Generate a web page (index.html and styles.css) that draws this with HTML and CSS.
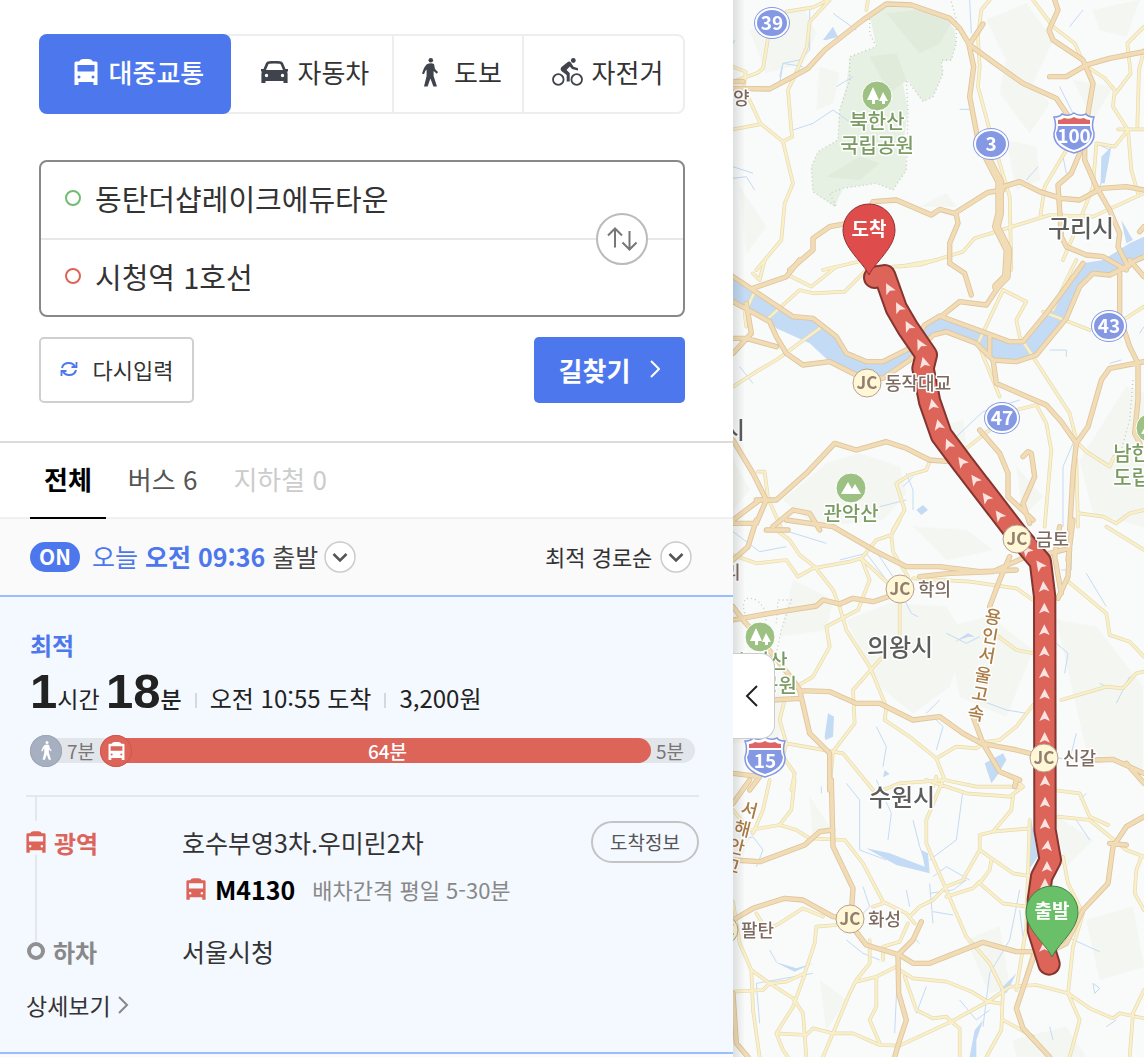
FILE: index.html
```html
<!DOCTYPE html>
<html lang="ko">
<head>
<meta charset="utf-8">
<meta name="viewport" content="width=device-width, initial-scale=1">
<title>길찾기</title>
<link rel="stylesheet" href="styles.css">
</head>
<body>
<svg class="sprite" aria-hidden="true">
  <symbol id="i-bus" viewBox="0 0 24 26"><path fill-rule="evenodd" d="M2 2.500H5Q6 0 9 0h6q3 0 4 2.500h3q1.500 0 1.500 1.500V26h-4v-3H4.500v3h-4V4q0-1.500 1.500-1.500zM3.500 6v6.500h17V6zM5 16.500a1.500 1.500 0 1 0 0 3 1.500 1.500 0 0 0 0-3zM19 16.500a1.500 1.500 0 1 0 0 3 1.500 1.500 0 0 0 0-3z"/></symbol>
  <symbol id="i-car" viewBox="0 0 27 22"><path fill-rule="evenodd" d="M0 8h2.500L5 2Q5.800.400 8 .200q5.500-.600 11 0 2.200.200 3 1.800l2.500 6H27v2.500h-1q.600 1 .600 2.500v9H22.500v-2h-18v2H.400v-9q0-1.500.600-2.500H0zM5 9h17l-2.300-5.400Q19.400 3 18.500 2.800q-5-.500-10 0-.900.200-1.200.800zM5.500 12.800a1.700 1.700 0 1 0 0 3.400 1.700 1.700 0 0 0 0-3.400zM21.500 12.800a1.700 1.700 0 1 0 0 3.400 1.700 1.700 0 0 0 0-3.400z"/></symbol>
  <symbol id="i-walk" viewBox="0 0 16 29"><circle cx="8.800" cy="2.300" r="2.300"/><path d="M4.500 6.500Q8.500 4.500 12 6l1 5 3 3-1.200 1.800L11.600 13v5L15 28.600h-3.600L8.400 20.500 5.600 28.600H2L4.600 18v-6.500L3.300 13 2 16.200 0 15.400 2 10z"/></symbol>
  <symbol id="i-bike" viewBox="0 0 31 28"><circle cx="6.300" cy="21.500" r="5.300" fill="none" stroke="currentColor" stroke-width="1.800"/><circle cx="24.700" cy="21.500" r="5.300" fill="none" stroke="currentColor" stroke-width="1.800"/><circle cx="21.300" cy="2.500" r="2.400"/><path d="M9.500 9l6-4.800q2-1.500 3.500.500l2.500 4 4.500 1.500V12.400L20 11 17.800 8.500 14.500 12l3.200 3V23.600h-3V17L10 13.500Q7.500 11.500 9.500 9z"/></symbol>
  <symbol id="i-down" viewBox="0 0 32 32"><circle cx="16" cy="16" r="15" fill="#fff" stroke="#ccc" stroke-width="1.500"/><path d="M9.500 13l6.500 6.500 6.500-6.500" fill="none" stroke="#555" stroke-width="2.500"/></symbol>
</svg>

<main class="app">
<div class="panel">
  <form class="search">
    <nav class="modes" aria-label="이동 수단">
      <button type="button" class="mode mode-on"><svg width="24" height="26"><use href="#i-bus"/></svg>대중교통</button>
      <button type="button" class="mode mode-car"><svg width="27" height="22"><use href="#i-car"/></svg>자동차</button>
      <button type="button" class="mode mode-walk"><svg width="16" height="29"><use href="#i-walk"/></svg>도보</button>
      <button type="button" class="mode mode-bike"><svg width="31" height="28"><use href="#i-bike"/></svg>자전거</button>
    </nav>
    <div class="places">
      <div class="place"><span class="dot dot-start"></span><input type="text" aria-label="출발지" value="동탄더샵레이크에듀타운"></div>
      <div class="place"><span class="dot dot-end"></span><input type="text" aria-label="도착지" value="시청역 1호선"></div>
      <button type="button" class="swap" aria-label="출발지와 도착지 바꾸기"><svg width="30" height="24" viewBox="0 0 30 24" fill="none" stroke="#777" stroke-width="2"><path d="M8 20.500V1.500M1 8.500l7-7 7 7M22.500 4v18.500M15.500 15.500l7 7 7-7"/></svg></button>
    </div>
    <div class="actions">
      <button type="reset" class="reset"><svg width="18" height="16" viewBox="0 0 18 16" fill="none" stroke="#4d77ec" stroke-width="2"><path d="M2 7Q3 2 9 2q4 0 6 3.500M16 9q-1 5-7 5-4 0-6-3.500"/><path d="M16.500 1v5h-5M1.500 15v-5h5" stroke-width="1.800"/></svg>다시입력</button>
      <button type="submit" class="find">길찾기<svg width="10" height="18" viewBox="0 0 10 18" fill="none" stroke="#fff" stroke-width="2"><path d="M1 1l8 8-8 8"/></svg></button>
    </div>
  </form>

  <nav class="filters" aria-label="경로 종류">
    <button type="button" class="filter filter-on">전체</button>
    <button type="button" class="filter">버스 6</button>
    <button type="button" class="filter" disabled>지하철 0</button>
  </nav>

  <div class="options">
    <button type="button" class="power" aria-pressed="true">ON</button>
    <button type="button" class="depart"><span class="depart-text"><span class="when">오늘 <b>오전 09:36</b></span> 출발</span><svg width="32" height="32"><use href="#i-down"/></svg></button>
    <label class="sort"><select aria-label="정렬"><option>최적 경로순</option></select><svg width="32" height="32"><use href="#i-down"/></svg></label>
  </div>

  <article class="route">
    <div class="badge">최적</div>
    <div class="summary">
      <div class="total"><b>1</b>시간 <b>18</b><strong>분</strong></div>
      <div class="fact">오전 10:55 도착</div>
      <div class="fact">3,200원</div>
    </div>
    <div class="bar">
      <span class="knob knob-walk"><svg width="11" height="19"><use href="#i-walk"/></svg></span>
      <span class="walk">7분</span>
      <span class="knob knob-bus"><svg width="17" height="18"><use href="#i-bus"/></svg></span>
      <span class="ride">64분</span>
      <span class="last">5분</span>
    </div>
    <div class="steps">
      <div class="rail rail-top"></div>
      <div class="stop stop-bus"><svg width="20" height="22"><use href="#i-bus"/></svg>광역</div>
      <div class="name">호수부영3차.우미린2차</div>
      <button type="button" class="arrivals">도착정보</button>
      <div class="rail rail-mid"></div>
      <div class="line"><svg width="20" height="22"><use href="#i-bus"/></svg><b>M4130</b><span>배차간격 평일 5-30분</span></div>
      <div class="stop stop-off"><span class="ring"></span>하차</div>
      <div class="name">서울시청</div>
    </div>
    <a class="more" href="#detail">상세보기<svg width="11" height="18" viewBox="0 0 11 18" fill="none" stroke="#888" stroke-width="2"><path d="M1 1l8 8-8 8"/></svg></a>
  </article>
</div>

<section class="map" aria-label="지도">
<svg class="canvas" viewBox="0 0 411 1057" preserveAspectRatio="xMidYMid slice">
<defs>
  <path id="arrow" d="M0-17L16 15 0 8-16 15z"/>
  <path id="track" d="M425 832L455 827 490 925 525 985 580 1065 570 1105 590 1205 625 1305 690 1392 850 1600 922 1685 935 1790 936 2490 952 2580 926 2630 916 2700 916 2790 948 2892"/>
  <g id="minor">
    <path d="M290 0L230 65 222 140 182 235 165 270 175 390 178 410 150 425 180 550 155 610 145 720 70 810M160 35L240 22 285 0M105 115L90 205 75 218 0 245M0 200l38 15-5 45M45 290L82 370 150 425M0 388l80-15M400 30l5-30M770 0L745 30 735 110 740 200 735 260 770 390 830 590 835 810M900 0L960 80 1025 130 1055 195 1115 235 1145 270 1140 320 1185 390 1195 510 1215 580M1233 80l-50 50 10 90-45 60M1233 150l-15 60-5 170M1155 388H1233M1185 390L1145 440 1090 430 1080 560 1045 650 990 780M1000 450L935 560 922 650M480 800L560 795 690 755 725 715 950 645 1080 650 1233 580M270 810L375 785"/>
    <path transform="translate(0 780)" d="M60 40l20 20 15-60M165 45L235 80 310 20M100 180L200 90 240 100 335 95 400 30M500 20L610 0M810 90L735 250 800 410M810 90L880 125 850 180 860 230 900 290 1010 460 1030 540M65 95L35 160 40 200M0 380L70 335 130 300 260 205M930 155L1070 210M1170 180L1233 140M700 565L770 510M850 450L910 435 940 490 955 570 935 800M1030 545L1060 575 1130 620 1143 590M75 635l20 0 10 80 40 90M590 605L580 630 530 645 490 670 515 750 480 810M1035 800L1030 600M1040 760L1110 770 1150 790 1190 760 1233 750M960 150L1000 60 1030 0"/>
    <path transform="translate(0 1560)" d="M0 105L70 130 160 120 195 170 240 145 350 125 385 115 410 180 375 270 280 320 290 380 240 470 190 500M130 30L170 60 200 105 245 140 300 210 320 260 340 330 410 440 460 560 455 600 530 650 610 715 635 780M385 115L460 185M500 0L475 45 430 60 385 115M475 45L480 95 525 170M500 240V345M445 415L360 510 365 610 300 695 290 800M540 175L710 185 850 205 900 240M790 345L850 390 900 400M1000 180L1120 280 1130 345 1190 365 1233 410M985 540L1120 500 1170 505 1210 460 1233 455M900 555L850 620 800 660 760 665M155 540L140 600 160 670 150 710 185 760 175 810M160 670L330 700 420 810M610 715L670 680 730 685 760 665M450 810L500 790 635 780 730 800 860 800M600 800L610 770M1120 20L1233 90"/>
    <path transform="translate(0 2340)" d="M185 0L175 90 140 135 50 150 0 90M110 0L90 90 60 160M140 135L190 150 230 175 335 180 390 250 450 365 520 400 545 430M630 0L580 120V190L640 330 700 470 770 550 810 630 805 750 760 831M580 0L700 40 830 50 870 20 850 0M840 50L835 90 780 155 740 165V210L840 280 900 290M740 210L700 280 690 300 640 320 600 360 560 380 530 410M780 155L890 145M420 380L450 370M740 305L720 325 640 350M740 310L810 370 880 380M775 240L770 270 740 310M960 30L1040 40 1070 110 1125 135M975 110L1070 120 1180 210 1233 230M990 230L1005 310 1050 400 1020 500 1005 640 1040 720 1010 831M1225 230L1210 270 1205 340 1233 390M0 365L20 490 55 570 60 690 80 831M55 570L110 610 160 605 215 580 245 490 250 440 310 435M0 635L90 630 110 610 180 655 210 700 220 831M215 585L180 680 130 760 150 810 165 831M130 760L220 765 240 745 300 760H360L440 795 500 797 655 725 680 745V831M270 831L350 640 370 600 410 550V480M370 605L430 590 490 560M430 590L430 680 410 720 440 790M500 570L540 595 640 605 715 635 765 665 800 670M515 590L550 690 600 715 640 710 655 725M655 725L700 700 765 665 830 620 910 615 1005 640 1070 685 1140 715 1160 700 1233 715M1233 630L1200 700 1190 831M850 630L880 440 890 120M870 620L900 520M810 720L900 770M70 400L100 450 140 430 210 385 270 410M450 540V500L500 485 525 430"/>
  </g>
  <g id="major">
    <path d="M0 265L110 267 180 230 225 205 275 150 390 60 460 12 535 15 650 55 680 85 710 135 820 215 870 250 970 295 1010 355M0 245H30M750 72L708 135 722 200 710 290 735 420 800 545M965 0L975 30 948 90 960 120 1050 180 1080 250 1055 400 1055 480 1090 560 1130 630 1160 700 1155 740 1185 800M950 230H1000L1060 195 1130 175 1233 155M1040 460L1015 520 975 555 985 710 1000 740 1060 765 1110 770 1180 810M810 560L860 545 920 575 985 595 1040 600 1105 565 1180 560 1233 570M170 810L240 750V715L290 680 400 660 420 605 490 600 595 645 620 628 665 640 765 577 810 570M670 645L675 670 650 730 650 790M1233 770L1190 790M1233 680L1220 695"/>
    <path transform="translate(0 780)" d="M0 50L60 90 180 170 240 175 310 230 340 280 400 305 450 305 540 260 575 195 620 168 830 245 870 245 940 160 1000 80 1050 10M0 125L110 185 130 230 160 280 210 315 290 305 370 345 450 355 530 300 600 225 640 215 730 250 780 300 850 305 910 285 1000 175 1040 80 1080 40 1130 45 1190 15M0 235H40L130 260M40 130L55 220 0 280M60 85L160 50 200 0M630 165L680 125 760 135 790 90 820 50M650 10L695 40 715 105M770 230V290M780 300L790 370 940 435 985 485 1030 550 1020 640 1010 810M1160 40V170L1190 260 1215 310V420L1205 520 1225 560M1233 305L1130 325 1105 360 1065 500 1030 550M740 510L800 580 825 640 825 710 900 780M870 590L885 575 895 580 905 650 870 730 890 790M0 540L60 640 100 720 70 790M70 720H130L220 640 305 550 370 570 460 545 520 565 590 600 650 605M0 780L80 720M0 790L70 790M165 810H100M260 810L230 760 180 750 120 800M1190 0L1233 50"/>
    <path transform="translate(0 1560)" d="M70 0L45 80 0 120M160 0L300 20 430 95 520 140 620 140 740 155 850 150M560 170L650 160 780 155 880 110M0 300L110 280 250 258 270 240 320 252 360 235 420 245 480 225M0 260L30 300 100 380 180 480 200 510 230 640 290 700V810M200 512L290 515 370 550 440 550 470 565 540 600 620 590 690 640 745 670 850 690 930 710M720 590L750 670 800 755 860 780M120 540L200 535M830 110L800 180 770 260M950 100L1010 85 1005 170 975 235M980 20L965 110 985 220M1020 0L1005 120M1090 720L1140 718 1233 760M0 760L80 770 50 810M1180 730L1233 790"/>
    <path transform="translate(0 2340)" d="M50 0L0 70M295 0L300 200 360 325 355 400M0 240L80 245 215 195 260 155 300 150M0 420L60 385 155 355 210 360 300 410 350 415M365 450L400 495 500 525 540 550 590 550 750 487 850 515 900 515M565 425L540 480 495 525 497 640 520 720 500 780 485 831M905 520L850 685 870 745 950 831M1233 110L1180 140 1140 200 1125 310 1050 390 1000 490 960 510M1180 195L1130 190M0 640L10 790 45 831M845 20L850 0"/>
  </g>
  <g id="interstate">
    <path d="M-20-16q6 0 8-3 7 3 12-1 5 4 12 1 2 3 8 3-3 8 0 16Q21 14 0 20-21 14-20 0q3-8 0-16z" fill="#fff" stroke="#8598e4" stroke-width="1.500"/>
    <path d="M-16-7h32q0 4 2 7Q17 12 0 17-17 12-18 0q2-3 2-7z" fill="#8598e4"/>
    <path d="M-16-9v-4q4 0 6-2 6 2 10-1 4 3 10 1 2 2 6 2v4z" fill="#de6565"/>
  </g>
  <g id="trees"><circle r="15" fill="#9dc183" stroke="#fff"/><path d="M-4-9L2 4H-2V8H-5V4h-5zM6-4l5 9H8v3H5V5H2z" fill="#fff"/></g>
  <g id="peak"><circle r="15" fill="#9dc183" stroke="#fff"/><path d="M-10 6L-3-6 1 1 4-4 10 6z" fill="#fff"/></g>
  <path id="pin" d="M0 45C-6 32-26 18-26 0A26 26 0 1 1 26 0C26 18 6 32 0 45z"/>
</defs>
<g transform="scale(.33333)">
  <g class="terrain">
    <path d="M50 90L210 20 250 100 210 190 100 220zM260 200l60 20-20 90-50 20zM760 60L880 10 960 120 900 250 950 310 890 400 800 280 820 180zM1080 30L1220 0 1180 110 1100 90zM820 420l90 20 10 100-70 30zM20 560l80 120-60 80zM1020 240l60 120 60-100zM560 620l80-40 30 40z"/>
    <path transform="translate(0 780)" d="M150 720L280 610 380 580 500 620 520 700 450 780 250 800zM1040 600L1180 380 1233 400 1233 800 1080 760zM850 620l80 90-60 60zM600 510l90-30 10 70zM0 600l50 90-50 60z"/>
    <path transform="translate(0 1560)" d="M540 20L700 30 780 90 640 120zM340 300L470 250 640 260 700 360 650 500 540 580 440 500zM640 320l130-30 130 100-80 200-140-60zM970 300l120 20 140 180v250l-170-60zM0 470l160 20-20 160-140 20zM180 180l120 60-20 90-140 20z"/>
    <path transform="translate(0 2340)" d="M960 100L1080 180 1000 260zM1060 420L1200 380 1233 560 1100 600zM700 480l100-40 30 180-60 20zM260 600l80 60-60 90zM0 100l60 60-30 60zM840 780l160-40 60 91H850zM230 50l60 90-50 40z"/>
  </g>
  <path class="park" d="M410 45L455 20 535 25 640 55 665 90 670 130 655 180 625 185 630 220 600 290 570 305 545 270 525 240 510 250 525 330 515 400 520 510 480 570 430 550 330 565 305 620 240 575 235 500 255 455 315 420 320 330 340 260 350 170 430 140z"/>
  <path class="ridge" d="M460 40L560 160 620 130 660 60 560 30zM410 170l60 110 50-40-30-80zM280 530l100-60 60 20-60 50z"/>
  <path class="dots" d="M655 5L670 60 670 130 655 180 625 180 630 220 600 290 570 305 545 270 520 240 525 330 520 510 480 570 430 550 330 565 290 580 310 620 240 575 235 500 255 455 315 420 320 330 350 240 350 170 430 140 410 100 410 40M1200 1140L1190 1260 1165 1350M35 1840Q20 1780 70 1800 110 1830 95 1880M130 1870L135 1800 175 1800 145 1890 130 1960"/>
  <g class="water">
    <path d="M0 835L60 880 180 950 240 955 310 1010 340 1060 400 1085 450 1085 540 1040 575 980 620 950 830 1025 870 1025 940 940 1000 860 1050 790 1110 780 1190 730 1233 710V780L1130 825 1080 820 1040 860 1000 955 910 1065 850 1085 780 1080 730 1030 640 995 600 1005 530 1080 450 1135 370 1125 290 1085 230 1030 130 985 110 965 40 930 0 900z"/>
    <path d="M270 120l30-40 15 30-35 10zM275 2210l10-70 18 10-3 60-22 10zM755 2290l20 60 15-20 30-50-10-20zM885 2500l10-40 20 110-28 40zM400 2545l70 15 105 40-10-50 20 10 5 60-100-25zM125 2885l65 20 50-15-55 25zM710 3171l15-80 25-30-20 60v50zM800 2970l50-50-30 60zM550 1530l20-15 15 15-20 15zM665 1925l40-25 20 10-20 0zM455 2310l15 12-20 10zM1165 660l35 60-20 10zM1105 470l30-30-20 110h-12z"/>
    <path class="stream" d="M0 130L5 120M230 30v120l-30 30-50 10-10 40M300 40l70 50M140 250l10-60 60 10M180 390L240 370 300 330 370 380M310 260l50-30M0 500l60 20M0 535l40-5 25 40M710 0l5 100M1010 80l40-50M980 260l40 80M1090 430l40 20-10 60-20 50M880 540l35-40M990 470l10 50M680 328h30M20 1100l40 50M670 1310L750 1235 860 1200M950 1050h50l0 20M1130 1090l35-10M990 1580V1400L1020 1330M1220 1000l13-20M520 1420l20 50 0 60M510 1460l30-30M440 1520l80-20M0 1595L80 1655 160 1640M150 1590l130 40M320 1680l80-20 60 80M420 1640l60 90M515 1800l20 40 20 10M640 1900l60 30 40-20M740 2100l80 30 60 10M970 1930l35 30-10 60M1150 2110l40-80M1060 1720l60 100M1120 2060l-20-10M580 2140l40-40M600 2150l30 30-20 70M430 2180l30 60-10 60M900 2260l110 20 20-80M1015 1640v70l-30 0M340 2350l40 50 0 150 80 30M430 2340l45 100-10 80M540 2460l20 80 15 40M690 2370l-20 150-80 60M590 2680l70-10 40-30M110 2850l20 35M750 3080l20-160 60-100 30-150M870 2810l-10-80M600 2630l40-30 70 40M600 2735l60 10M590 2650l10 120M485 3100l10-220M550 3040l30-80M560 2830l-20-20M0 2530l60-20 30 40-20 50M80 3070l-10-120 170-30M950 3080l10 40M1080 2950l20 15-15 15zM1120 3080l30-20M1000 2810l100 45M680 3000l50 60 40-30M390 2660l20 60-40 40M340 2820l50 40 50 20M265 2380l0-20M530 2720l-10-50M1030 2460l40 60M1060 2380l-20 20"/>
  </g>
  <use href="#minor" class="minor-case"/><use href="#minor" class="minor-fill"/>
  <path class="wide-case" d="M735 420L800 545 800 640 790 680 825 750 820 830 790 860"/>
  <use href="#major" class="major-case"/><use href="#major" class="major-fill"/>
  <path class="wide-fill" d="M735 420L800 545 800 640 790 680 825 750 820 830 790 860"/>
  <use href="#track" class="track-case"/><use href="#track" class="track-fill"/>
  <g class="arrows">
    <use href="#arrow" transform="translate(467 865) rotate(-28)"/><use href="#arrow" transform="translate(497 922) rotate(-28)"/><use href="#arrow" transform="translate(526 978) rotate(-28)"/><use href="#arrow" transform="translate(561 1032) rotate(-28)"/><use href="#arrow" transform="translate(573 1087) rotate(-14)"/><use href="#arrow" transform="translate(599 1213) rotate(-12)"/><use href="#arrow" transform="translate(617 1274) rotate(-14)"/><use href="#arrow" transform="translate(646 1332) rotate(-24)"/><use href="#arrow" transform="translate(686 1385) rotate(-36)"/><use href="#arrow" transform="translate(725 1438) rotate(-36)"/><use href="#arrow" transform="translate(759 1492) rotate(-36)"/><use href="#arrow" transform="translate(798 1545) rotate(-36)"/><use href="#arrow" transform="translate(880 1650) rotate(-40)"/><use href="#arrow" transform="translate(920 1695) rotate(-36)"/><use href="#arrow" transform="translate(932 1760) rotate(-5)"/>
    <use href="#arrow" transform="translate(934 1825)"/><use href="#arrow" transform="translate(934 1890)"/><use href="#arrow" transform="translate(934 1954)"/><use href="#arrow" transform="translate(934 2019)"/><use href="#arrow" transform="translate(935 2083)"/><use href="#arrow" transform="translate(935 2148)"/><use href="#arrow" transform="translate(935 2213)"/><use href="#arrow" transform="translate(936 2343)"/><use href="#arrow" transform="translate(936 2407)"/><use href="#arrow" transform="translate(936 2472)"/><use href="#arrow" transform="translate(943 2537) rotate(8)"/><use href="#arrow" transform="translate(942 2600)"/><use href="#arrow" transform="translate(936 2652)"/><use href="#arrow" transform="translate(934 2840)"/>
  </g>
</g>

<g class="shield">
  <ellipse cx="39" cy="23" rx="18" ry="16"/><ellipse class="in" cx="39" cy="23" rx="16" ry="14"/>
  <ellipse cx="258" cy="144" rx="18" ry="16"/><ellipse class="in" cx="258" cy="144" rx="16" ry="14"/>
  <ellipse cx="376" cy="326" rx="18" ry="16"/><ellipse class="in" cx="376" cy="326" rx="16" ry="14"/>
  <ellipse cx="269" cy="418" rx="18" ry="16"/><ellipse class="in" cx="269" cy="418" rx="16" ry="14"/>
</g>
<use href="#interstate" x="341" y="133"/><use href="#interstate" x="32" y="757"/>
<g class="number"><text x="39" y="30">39</text><text x="258" y="151">3</text><text x="376" y="333">43</text><text x="269" y="425">47</text><text x="341" y="143">100</text><text x="32" y="768">15</text></g>

<use href="#trees" x="144" y="96"/><use href="#trees" x="27" y="637"/><use href="#peak" x="118" y="488"/><use href="#peak" x="418" y="428"/>
<g class="label nature"><text x="144" y="129">북한산</text><text x="144" y="153">국립공원</text><text x="118" y="521">관악산</text><text x="27" y="669">수리산</text><text x="27" y="693">도립공원</text><text x="417" y="461">남한산성</text><text x="417" y="485">도립공원</text></g>
<g class="label city"><text x="348" y="237">구리시</text><text x="167" y="656">의왕시</text><text x="169" y="806">수원시</text><text x="-21" y="439">안산시</text></g>
<g class="label road"><text x="259 256 253 249 246 242" y="622 641 660 680 699 718" rotate="10">용인서울고속</text><text x="15 8 2 -3" y="814 833 851 870" rotate="14">서해안고</text></g>
<g class="junction"><circle cx="134" cy="383" r="14"/><circle cx="167" cy="589" r="14"/><circle cx="284" cy="539" r="14"/><circle cx="311" cy="758" r="14"/><circle cx="117" cy="919" r="14"/><circle cx="-9" cy="930" r="14"/></g>
<g class="jc"><text x="134" y="389">JC</text><text x="167" y="595">JC</text><text x="284" y="545">JC</text><text x="311" y="764">JC</text><text x="117" y="925">JC</text><text x="-9" y="936">JC</text></g>
<g class="label place-name"><text x="152" y="390">동작대교</text><text x="185" y="596">학의</text><text x="303" y="546">금토</text><text x="330" y="765">신갈</text><text x="135" y="926">화성</text><text x="8" y="937">팔탄</text><text x="0" y="105">양</text><text x="-9" y="579">리</text></g>
<use href="#pin" x="136" y="230" class="pin-end"/><use href="#pin" x="319" y="912" class="pin-start"/>
<g class="pin-text"><text x="136" y="236">도착</text><text x="319" y="918">출발</text></g>
</svg>
<button type="button" class="fold" aria-label="패널 접기"><svg width="14" height="24" viewBox="0 0 14 24" fill="none" stroke="#222" stroke-width="2"><path d="M12 2L2 12l10 10"/></svg></button>
</section>
</main>
</body>
</html>
```
FILE: styles.css
```css
* { box-sizing: border-box; }
body {
  margin: 0;
  font-family: "Noto Sans CJK KR", sans-serif;
  color: #222;
  fill: currentColor;
  background: #fff;
}
button, input, select { font: inherit; color: inherit; margin: 0; }
button { padding: 0; border: 0; background: none; cursor: pointer; }
svg { flex: none; }
.sprite { position: absolute; width: 0; height: 0; }

.app {
  display: grid;
  grid-template-columns: 733fr 411fr;
  min-height: 100vh;
}
.panel { min-width: 0; background: #fafafa; }

/* search form */
.search {
  padding: 34px 48px 38px 39px;
  background: #fff;
  border-bottom: 2px solid #dcdcdc;
}
.modes {
  display: flex;
  height: 80px;
  margin-bottom: 46px;
  border: 2px solid #eee;
  border-radius: 8px;
}
.mode {
  display: flex;
  align-items: center;
  justify-content: center;
  flex: 163 1 0;
  gap: 9px;
  padding: 0 0 4px 8px;
  font-size: 26px;
  line-height: 38px;
  color: #333;
  border-left: 2px solid #eee;
}
.mode svg { color: #3f434b; }
.mode-on {
  flex-grow: 196;
  gap: 11px;
  margin: -2px 0 -2px -2px;
  color: #fff;
  font-weight: 500;
  background: #4d77ec;
  border: 0;
  border-radius: 8px;
}
.mode-on svg { color: #fff; }
.mode-car { border-left: 0; }
.mode-walk { flex-grow: 128; gap: 16px; }
.mode-bike { flex-grow: 161; }
.places {
  position: relative;
  margin-bottom: 20px;
  border: 2px solid #888;
  border-radius: 8px;
}
.place {
  display: flex;
  align-items: center;
  gap: 14px;
  height: 76px;
  padding: 0 96px 4px 24px;
}
.place + .place { height: 77px; border-top: 2px solid #e8e8e8; }
.place input {
  flex: 1;
  min-width: 0;
  padding: 0;
  border: 0;
  outline: 0;
  background: none;
  font-size: 29px;
  line-height: 44px;
  color: #333;
}
.dot {
  width: 16px;
  height: 16px;
  border: 2px solid #6fbc72;
  border-radius: 50%;
}
.dot-end { border-color: #dd6459; }
.swap {
  position: absolute;
  top: 51px;
  right: 35px;
  display: grid;
  place-items: center;
  width: 52px;
  height: 52px;
  background: #fff;
  border: 2px solid #bbb;
  border-radius: 50%;
}
.actions { display: flex; justify-content: space-between; }
.reset, .find {
  display: flex;
  align-items: center;
  justify-content: center;
  height: 66px;
  padding-bottom: 2px;
  border-radius: 5px;
}
.reset {
  gap: 15px;
  width: 155px;
  font-size: 22px;
  color: #333;
  border: 2px solid #d0d0d0;
}
.find {
  gap: 20px;
  width: 151px;
  font-size: 26px;
  font-weight: 700;
  color: #fff;
  background: #4d77ec;
}

/* result filters */
.filters {
  display: flex;
  gap: 24px;
  padding: 0 30px;
  background: #fff;
  border-bottom: 2px solid #f0f0f0;
}
.filter {
  height: 74px;
  padding: 0 6px 4px;
  font-size: 26px;
  color: #555;
}
.filter-on {
  height: 76px;
  margin: 0 -8px -2px 0;
  padding: 0 14px 4px;
  font-weight: 700;
  color: #000;
  border-bottom: 2px solid #000;
}
.filter:disabled { color: #ccc; }

.options {
  display: flex;
  align-items: center;
  height: 76px;
  padding: 0 41px 0 30px;
}
.power {
  width: 50px;
  height: 30px;
  margin-right: 12px;
  padding-bottom: 2px;
  font-size: 21px;
  line-height: 28px;
  font-weight: 700;
  color: #fff;
  background: #4d77ec;
  border-radius: 15px;
}
.depart {
  display: flex;
  align-items: center;
  gap: 6px;
  font-size: 25px;
  color: #444;
}
.depart-text { padding-bottom: 3px; }
.when { color: #4d77ec; }
.sort {
  position: relative;
  display: flex;
  align-items: center;
  margin-left: auto;
}
.sort select {
  appearance: none;
  padding: 0 40px 3px 0;
  border: 0;
  outline: 0;
  background: none;
  font-size: 22px;
  line-height: 32px;
  color: #333;
}
.sort svg { position: absolute; right: 0; pointer-events: none; }

/* best route */
.route {
  padding: 30px 34px 29px 26px;
  background: #f4f8ff;
  border: solid #9bbdfb;
  border-width: 2px 0;
}
.badge {
  padding-left: 4px;
  font-size: 24px;
  line-height: 36px;
  font-weight: 700;
  color: #4d77ec;
}
.summary {
  display: flex;
  align-items: baseline;
  height: 56px;
  padding-left: 4px;
  line-height: 56px;
  font-size: 24px;
}
.total { font-size: 23px; }
.total b { font-family: "Liberation Sans", sans-serif; font-size: 49px; }
.total strong { font-weight: 500; }
.fact::before {
  content: "";
  display: inline-block;
  width: 2px;
  height: 15px;
  margin: 0 13px;
  background: #d5d8de;
}
.bar {
  display: flex;
  align-items: center;
  height: 25px;
  margin: 19px 4px 32px;
  font-size: 19px;
  line-height: 25px;
  color: #777;
  background: #e2e5ea;
  border-radius: 13px;
}
.knob {
  display: grid;
  place-items: center;
  width: 32px;
  height: 32px;
  flex: none;
  color: #fff;
  border-radius: 50%;
}
.knob-walk { background: #a7b0c0; box-shadow: inset 0 0 0 1px #9ca6b6; }
.knob-bus { position: relative; background: #dd6459; box-shadow: inset 0 0 0 1px #cf584e; }
.walk { width: 38px; text-align: center; }
.ride {
  flex: 1;
  margin-left: -16px;
  padding-left: 8px;
  text-align: center;
  font-weight: 500;
  color: #fff;
  background: #dd6459;
  border-radius: 0 13px 13px 0;
}
.last { width: 44px; padding-left: 5px; }
.steps {
  display: grid;
  grid-template-columns: 156px 1fr auto;
  grid-template-rows: 24px 42px 52px 72px;
  align-items: center;
  border-top: 2px solid #e4e7ee;
}
.rail {
  grid-column: 1;
  align-self: stretch;
  width: 2px;
  margin-left: 9px;
  background: #e4e7ee;
}
.rail-top { grid-column: 1 / -1; }
.rail-mid { grid-row: 3 / 5; margin-top: -8px; margin-bottom: 46px; }
.stop {
  display: flex;
  align-items: center;
  gap: 8px;
  font-size: 24px;
  font-weight: 700;
}
.stop-bus { color: #dd6459; }
.stop-off { grid-column: 1; grid-row: 4; color: #888; }
.ring {
  width: 18px;
  height: 18px;
  margin-left: 1px;
  border: 4px solid #909090;
  border-radius: 50%;
}
.name { font-size: 25px; color: #333; }
.arrivals {
  width: 108px;
  height: 42px;
  padding-bottom: 2px;
  font-size: 19px;
  color: #555;
  border: 2px solid #c4c4c4;
  border-radius: 21px;
}
.line {
  grid-column: 2 / -1;
  grid-row: 3;
  display: flex;
  align-items: center;
  gap: 9px;
  padding-left: 4px;
  font-size: 22px;
  color: #888;
}
.line svg { color: #dd6459; }
.line b { margin-right: 8px; font-size: 25px; color: #000; }
.more {
  display: inline-flex;
  align-items: center;
  gap: 7px;
  font-size: 23px;
  line-height: 36px;
  color: #333;
  text-decoration: none;
}

/* map */
.map {
  position: relative;
  overflow: hidden;
  background: #f9fafa;
}
.canvas { position: absolute; inset: 0; width: 100%; height: 100%; }
.map::after {
  content: "";
  position: absolute;
  inset: 0 auto 0 0;
  width: 12px;
  background: linear-gradient(90deg, #0000001c, #0000);
}
.terrain { fill: #eef4ec; opacity: 0.6; }
.park { fill: #e6f0e3; }
.ridge { fill: #d9e6d5; opacity: 0.5; }
.dots { fill: none; stroke: #c3cdc0; stroke-width: 4; stroke-dasharray: 3 9; }
.water { fill: #c3dbf4; }
.stream { fill: none; stroke: #c3dbf4; stroke-width: 3; }
.minor-case, .minor-fill, .major-case, .major-fill,
.wide-case, .wide-fill, .track-case, .track-fill {
  fill: none;
  stroke-linejoin: round;
  stroke-linecap: round;
}
.minor-case { stroke: #e6d9b4; stroke-width: 11; }
.minor-fill { stroke: #f9f0c8; stroke-width: 7; }
.major-case { stroke: #dec49b; stroke-width: 16; }
.major-fill { stroke: #f1dcb5; stroke-width: 11; }
.wide-case { stroke: #dec49b; stroke-width: 26; }
.wide-fill { stroke: #f1dcb5; stroke-width: 21; }
.track-case { stroke: #84352f; stroke-width: 70; }
.track-fill { stroke: #dd6459; stroke-width: 58; }
.arrows { fill: #fbe3e0; }
.shield ellipse { fill: #8598e4; }
.shield .in { stroke: #fff; stroke-width: 2; }
.canvas text { text-anchor: middle; font-weight: 500; }
.canvas .number text { font-size: 19px; font-weight: 700; fill: #fff; }
.label text { paint-order: stroke; stroke: #fff; stroke-width: 3px; stroke-linejoin: round; }
.nature text { font-size: 20px; fill: #7a9c62; }
.city text { font-size: 24px; fill: #5c5c5c; }
.road text { font-size: 18px; fill: #a97c45; }
.junction circle { fill: #fff7d6; stroke: #b5a08e; }
.canvas .jc text { font-size: 17px; font-weight: 700; fill: #927e6f; }
.place-name text { font-size: 18px; fill: #7d6a60; }
.canvas .place-name text { text-anchor: start; }
.pin-end { fill: #df4c4c; stroke: #8e2f2f; }
.pin-start { fill: #6abf69; stroke: #3f7f45; }
.canvas .pin-text text { font-size: 19px; font-weight: 700; fill: #fff; }
.fold {
  position: absolute;
  top: 653px;
  left: 0;
  z-index: 1;
  display: grid;
  place-items: center;
  width: 42px;
  height: 86px;
  padding-right: 4px;
  background: #fff;
  border: 1px solid #ccc;
  border-left: 0;
  border-radius: 0 14px 14px 0;
}
```
